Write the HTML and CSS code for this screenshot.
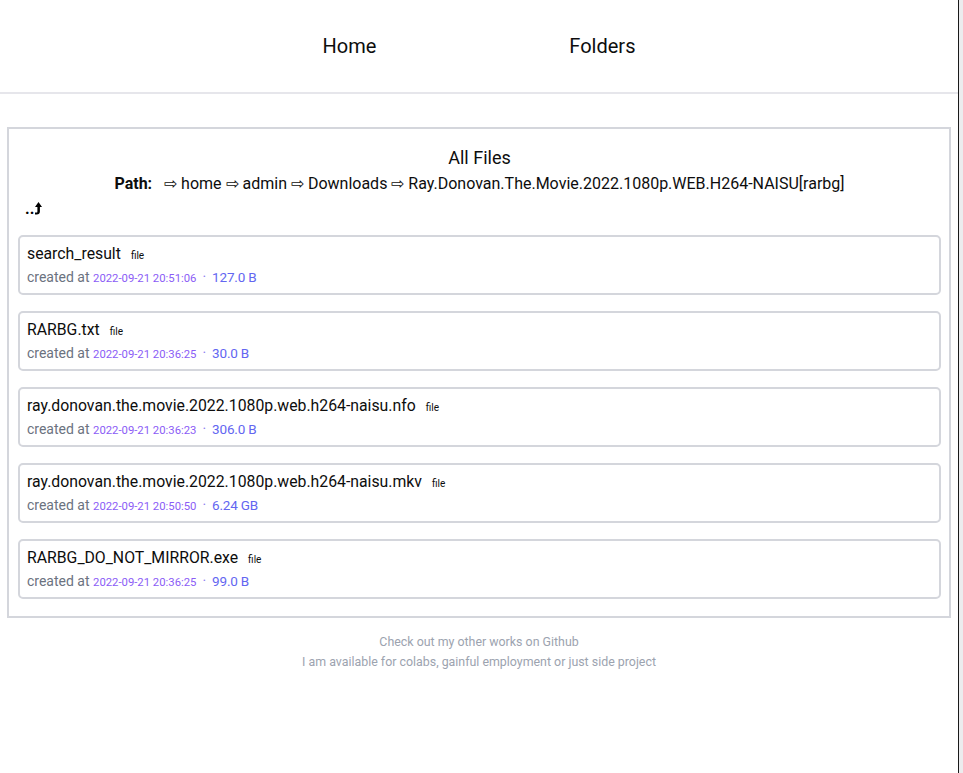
FILE: index.html
```html
<!DOCTYPE html>
<html lang="en">
<head>
<meta charset="utf-8">
<title>All Files</title>
<link rel="stylesheet" href="styles.css">
</head>
<body>
<div class="page">
  <header class="nav">
    <a class="nav-link" href="#">Home</a>
    <a class="nav-link" href="#">Folders</a>
  </header>
  <main class="files">
    <h2 class="title">All Files</h2>
    <div class="path"><b class="path-label">Path:</b><span class="crumbs">⇨ home ⇨ admin ⇨ Downloads ⇨ Ray.Donovan.The.Movie.2022.1080p.WEB.H264-NAISU[rarbg]</span></div>
    <a class="up" href="#">..<svg class="up-icon" width="8" height="13" viewBox="0 0 8 13"><path d="M4.5 0 L8 5 H5.9 V9.6 Q5.9 12.6 2.6 12.6 H1 V10.6 H2.4 Q3.4 10.6 3.4 9.4 V5 H1 Z" fill="#000"/></svg></a>
    <ul class="list">
      <li class="card">
        <div class="name">search_result<span class="tag">file</span></div>
        <div class="meta">created at <span class="date">2022-09-21 20:51:06</span><span class="sep">·</span><span class="size">127.0 B</span></div>
      </li>
      <li class="card">
        <div class="name">RARBG.txt<span class="tag">file</span></div>
        <div class="meta">created at <span class="date">2022-09-21 20:36:25</span><span class="sep">·</span><span class="size">30.0 B</span></div>
      </li>
      <li class="card">
        <div class="name">ray.donovan.the.movie.2022.1080p.web.h264-naisu.nfo<span class="tag">file</span></div>
        <div class="meta">created at <span class="date">2022-09-21 20:36:23</span><span class="sep">·</span><span class="size">306.0 B</span></div>
      </li>
      <li class="card">
        <div class="name">ray.donovan.the.movie.2022.1080p.web.h264-naisu.mkv<span class="tag">file</span></div>
        <div class="meta">created at <span class="date">2022-09-21 20:50:50</span><span class="sep">·</span><span class="size">6.24 GB</span></div>
      </li>
      <li class="card">
        <div class="name">RARBG_DO_NOT_MIRROR.exe<span class="tag">file</span></div>
        <div class="meta">created at <span class="date">2022-09-21 20:36:25</span><span class="sep">·</span><span class="size">99.0 B</span></div>
      </li>
    </ul>
  </main>
  <footer class="footer">
    <p class="footer-line">Check out my other works on Github</p>
    <p class="footer-line">I am available for colabs, gainful employment or just side project</p>
  </footer>
</div>
</body>
</html>
```

FILE: styles.css
```css
html {
  background: #ececee;
}
body {
  margin: 0;
  font-family: Roboto, "Open Sans", sans-serif;
  color: #0d0d0d;
}
.page {
  width: 959px;
  min-height: 773px;
  background: #fff;
  border-right: 1px solid #1a1a1a;
  box-sizing: border-box;
}
.nav {
  height: 92px;
  border-bottom: 2px solid #e6e6eb;
  display: flex;
  justify-content: center;
  align-items: center;
  gap: 193px;
}
.nav-link {
  color: #0d0d0d;
  text-decoration: none;
  font-size: 20px;
}
.files {
  margin: 33px 7px 0 7px;
  border: 2px solid #d4d6dc;
  padding: 17px 8px 17px 9px;
}
.title {
  margin: 0;
  text-align: center;
  font-size: 18px;
  font-weight: 400;
  line-height: 24px;
}
.path {
  margin-top: 2px;
  text-align: center;
  font-size: 16px;
  line-height: 24px;
}
.path-label {
  font-weight: 700;
  margin-right: 12px;
}
.up {
  display: inline-flex;
  align-items: flex-end;
  margin: 3px 0 0 7px;
  color: #000;
  text-decoration: none;
  font-size: 16px;
  font-weight: 700;
  line-height: 20px;
}
.up-icon {
  margin: 0 0 4px 0;
}
.list {
  list-style: none;
  margin: 16px 0 0 0;
  padding: 0;
  display: flex;
  flex-direction: column;
  gap: 16px;
}
.card {
  border: 2px solid #d4d6dc;
  border-radius: 5px;
  padding: 6px 7px 8px 7px;
  height: 60px;
  box-sizing: border-box;
}
.name {
  font-size: 15.8px;
  line-height: 22px;
  color: #0d0d0d;
}
.tag {
  font-size: 10px;
  margin-left: 10px;
}
.meta {
  font-size: 14px;
  line-height: 20px;
  color: #6b7280;
}
.date {
  font-size: 11.3px;
  color: #8b5cf6;
}
.sep {
  color: #8b7cf0;
  margin: 0 6px;
}
.size {
  font-size: 13.5px;
  letter-spacing: -0.2px;
  color: #6366f1;
}
.footer {
  margin-top: 14px;
  text-align: center;
}
.footer-line {
  margin: 0;
  font-size: 12.4px;
  line-height: 20px;
  color: #9ca3af;
}
```
